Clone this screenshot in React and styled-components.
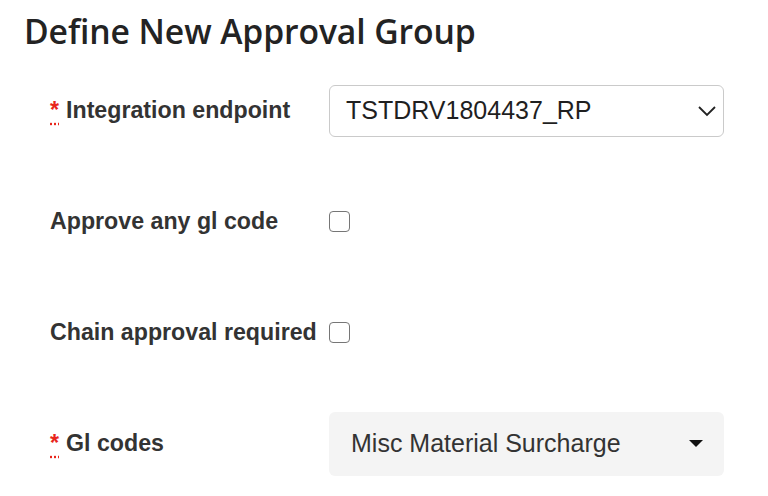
import React from "react";
import styled, { createGlobalStyle } from "styled-components";

const GlobalStyle = createGlobalStyle`
  body {
    margin: 0;
    background: #ffffff;
    font-family: "Liberation Sans", Arial, sans-serif;
  }
`;

const Page = styled.div`
  width: 768px;
  height: 496px;
  overflow: hidden;
`;

const Title = styled.h1`
  margin: 11px 0 4px;
  padding-left: 24px;
  font-family: "Open Sans", "Noto Sans", sans-serif;
  font-weight: 600;
  font-size: 33.7px;
  line-height: 40px;
  letter-spacing: -0.1px;
  color: #232323;
`;

const Form = styled.div`
  padding-left: 50px;
`;

const Row = styled.div`
  display: grid;
  grid-template-columns: 279px 395px;
  align-items: center;
  height: 111px;
`;

const Label = styled.label`
  font-size: 23.2px;
  font-weight: 700;
  color: #333333;
  white-space: nowrap;
`;

const Required = styled.abbr`
  color: #e8261c;
  text-decoration: underline dotted #e8261c;
  text-underline-offset: 5px;
  margin-right: 7px;
`;

const SelectBox = styled.div`
  display: flex;
  align-items: center;
  justify-content: space-between;
  box-sizing: border-box;
  height: ${(p) => (p.filled ? "64px" : "52px")};
  padding: ${(p) => (p.filled ? "0 21px 0 22px" : "0 6px 0 16px")};
  border: ${(p) => (p.filled ? "none" : "1px solid #cacaca")};
  border-radius: 6px;
  background: ${(p) => (p.filled ? "#f4f4f4" : "#ffffff")};
  font-size: 25px;
  color: ${(p) => (p.filled ? "#333333" : "#1f1f1f")};
`;

const Check = styled.input.attrs({ type: "checkbox" })`
  appearance: none;
  margin: 0;
  width: 21px;
  height: 21px;
  box-sizing: border-box;
  border: 1.5px solid #767676;
  border-radius: 4px;
  background: #fff;
`;

const Chevron = () => (
  <svg width="20" height="12" viewBox="0 0 20 12">
    <polyline points="2,2 10,10 18,2" fill="none" stroke="#222" strokeWidth="1.8" />
  </svg>
);

const Caret = () => (
  <svg width="14" height="8" viewBox="0 0 14 8">
    <polygon points="0,0 14,0 7,7" fill="#111" />
  </svg>
);

const App = () => {
  return (
    <Page>
      <GlobalStyle />
      <Title>Define New Approval Group</Title>
      <Form>
        <Row>
          <Label>
            <Required title="required">*</Required>Integration endpoint
          </Label>
          <SelectBox>
            <span>TSTDRV1804437_RP</span>
            <Chevron />
          </SelectBox>
        </Row>
        <Row>
          <Label>Approve any gl code</Label>
          <Check />
        </Row>
        <Row>
          <Label>Chain approval required</Label>
          <Check />
        </Row>
        <Row>
          <Label>
            <Required title="required">*</Required>Gl codes
          </Label>
          <SelectBox filled>
            <span>Misc Material Surcharge</span>
            <Caret />
          </SelectBox>
        </Row>
      </Form>
    </Page>
  );
};

export default App;
